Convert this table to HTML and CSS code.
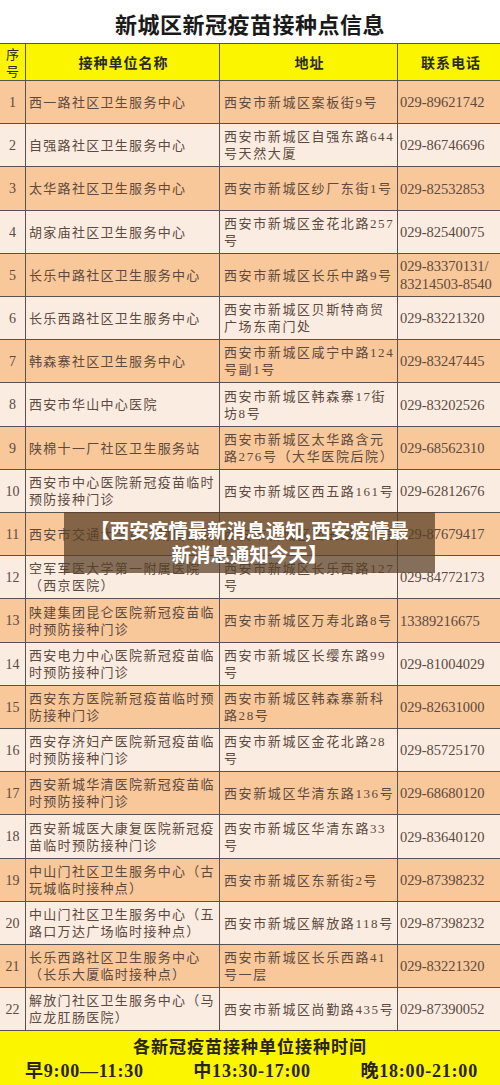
FILE: index.html
```html
<!DOCTYPE html>
<html lang="zh">
<head>
<meta charset="utf-8">
<title>新城区新冠疫苗接种点信息</title>
<link rel="stylesheet" href="styles.css">
</head>
<body>
<div class="page">
  <h1 class="title">新城区新冠疫苗接种点信息</h1>
  <table class="grid">
    <colgroup><col class="c1"><col class="c2"><col class="c3"><col class="c4"></colgroup>
    <thead>
      <tr class="head"><th class="num">序<br>号</th><th>接种单位名称</th><th>地址</th><th>联系电话</th></tr>
    </thead>
    <tbody>
      <tr class="odd"><td class="num">1</td><td class="name">西一路社区卫生服务中心</td><td class="addr">西安市新城区案板街9号</td><td class="tel">029-89621742</td></tr>
      <tr class="even"><td class="num">2</td><td class="name">自强路社区卫生服务中心</td><td class="addr">西安市新城区自强东路644号天然大厦</td><td class="tel">029-86746696</td></tr>
      <tr class="odd"><td class="num">3</td><td class="name">太华路社区卫生服务中心</td><td class="addr">西安市新城区纱厂东街1号</td><td class="tel">029-82532853</td></tr>
      <tr class="even"><td class="num">4</td><td class="name">胡家庙社区卫生服务中心</td><td class="addr">西安市新城区金花北路257号</td><td class="tel">029-82540075</td></tr>
      <tr class="odd"><td class="num">5</td><td class="name">长乐中路社区卫生服务中心</td><td class="addr">西安市新城区长乐中路9号</td><td class="tel">029-83370131/<br>83214503-8540</td></tr>
      <tr class="even"><td class="num">6</td><td class="name">长乐西路社区卫生服务中心</td><td class="addr">西安市新城区贝斯特商贸广场东南门处</td><td class="tel">029-83221320</td></tr>
      <tr class="odd"><td class="num">7</td><td class="name">韩森寨社区卫生服务中心</td><td class="addr">西安市新城区咸宁中路124号副1号</td><td class="tel">029-83247445</td></tr>
      <tr class="even"><td class="num">8</td><td class="name">西安市华山中心医院</td><td class="addr">西安市新城区韩森寨17街坊8号</td><td class="tel">029-83202526</td></tr>
      <tr class="odd"><td class="num">9</td><td class="name">陕棉十一厂社区卫生服务站</td><td class="addr"><div class="clip">西安市新城区太华路含元路276号（大华医院后院）</div></td><td class="tel">029-68562310</td></tr>
      <tr class="even"><td class="num">10</td><td class="name">西安市中心医院新冠疫苗临时预防接种门诊</td><td class="addr">西安市新城区西五路161号</td><td class="tel">029-62812676</td></tr>
      <tr class="odd"><td class="num">11</td><td class="name">西安市交通大学第二附属医院</td><td class="addr">西安市新城区西五路157号</td><td class="tel">029-87679417</td></tr>
      <tr class="even"><td class="num">12</td><td class="name">空军军医大学第一附属医院（西京医院）</td><td class="addr">西安市新城区长乐西路127号</td><td class="tel">029-84772173</td></tr>
      <tr class="odd"><td class="num">13</td><td class="name">陕建集团昆仑医院新冠疫苗临时预防接种门诊</td><td class="addr">西安市新城区万寿北路8号</td><td class="tel">13389216675</td></tr>
      <tr class="even"><td class="num">14</td><td class="name">西安电力中心医院新冠疫苗临时预防接种门诊</td><td class="addr">西安市新城区长缨东路99号</td><td class="tel">029-81004029</td></tr>
      <tr class="odd"><td class="num">15</td><td class="name">西安东方医院新冠疫苗临时预防接种门诊</td><td class="addr">西安市新城区韩森寨新科路28号</td><td class="tel">029-82631000</td></tr>
      <tr class="even"><td class="num">16</td><td class="name">西安存济妇产医院新冠疫苗临时预防接种门诊</td><td class="addr">西安市新城区金花北路28号</td><td class="tel">029-85725170</td></tr>
      <tr class="odd"><td class="num">17</td><td class="name">西安新城华清医院新冠疫苗临时预防接种门诊</td><td class="addr">西安新城区华清东路136号</td><td class="tel">029-68680120</td></tr>
      <tr class="even"><td class="num">18</td><td class="name">西安新城医大康复医院新冠疫苗临时预防接种门诊</td><td class="addr">西安市新城区华清东路33号</td><td class="tel">029-83640120</td></tr>
      <tr class="odd"><td class="num">19</td><td class="name">中山门社区卫生服务中心（古玩城临时接种点）</td><td class="addr">西安市新城区东新街2号</td><td class="tel">029-87398232</td></tr>
      <tr class="even"><td class="num">20</td><td class="name">中山门社区卫生服务中心（五路口万达广场临时接种点）</td><td class="addr">西安市新城区解放路118号</td><td class="tel">029-87398232</td></tr>
      <tr class="odd"><td class="num">21</td><td class="name">长乐西路社区卫生服务中心（长乐大厦临时接种点）</td><td class="addr">西安市新城区长乐西路41号一层</td><td class="tel">029-83221320</td></tr>
      <tr class="even"><td class="num">22</td><td class="name">解放门社区卫生服务中心（马应龙肛肠医院）</td><td class="addr">西安市新城区尚勤路435号</td><td class="tel">029-87390052</td></tr>
    </tbody>
  </table>
  <div class="footer">
    <div class="foot-title">各新冠疫苗接种单位接种时间</div>
    <div class="foot-times"><span>早9:00—11:30</span><span>中13:30-17:00</span><span>晚18:00-21:00</span></div>
  </div>
  <div class="banner">【西安疫情最新消息通知,西安疫情最<br>新消息通知今天】</div>
</div>
</body>
</html>
```
FILE: styles.css
```css
html, body {
  margin: 0;
  padding: 0;
  background: #ffffff;
}
.page {
  position: relative;
  width: 500px;
  height: 1085px;
  overflow: hidden;
  font-family: "Liberation Serif", "Noto Sans CJK SC", serif;
}
.title {
  margin: 0;
  height: 43px;
  line-height: 46px;
  text-align: center;
  font-size: 22px;
  font-weight: bold;
  color: #1a1a1a;
  font-family: "Noto Sans CJK SC", sans-serif;
  letter-spacing: 0.5px;
}
.grid {
  border-collapse: collapse;
  table-layout: fixed;
  width: 503px;
  margin-left: -1px;
}
.c1 { width: 26px; }
.c2 { width: 194px; }
.c3 { width: 178px; }
.c4 { width: 105px; }
.grid th, .grid td {
  border: 1px solid #5a5250;
  padding: 0 1px 0 3px;
  overflow: hidden;
}
.head th {
  background: #fbf500;
  height: 36px;
  font-family: "Noto Sans CJK SC", sans-serif;
  font-weight: bold;
  font-size: 14px;
  color: #2a2a20;
  letter-spacing: 1px;
}
.head th.num {
  font-weight: normal;
  font-size: 13px;
  line-height: 17px;
  padding: 0;
  letter-spacing: 0;
}
.grid tbody tr { height: 43px; }
.grid tbody tr:nth-child(5n+3) { height: 44px; }
.odd td { background: #f8c79a; }
.even td { background: #fbece2; }
.grid td {
  color: #5c4a3e;
  font-size: 13px;
  line-height: 17px;
  letter-spacing: 1.3px;
}
.grid td.num {
  text-align: center;
  padding: 0;
  font-size: 14px;
  letter-spacing: 0;
}
.grid td.addr { padding-left: 4px; letter-spacing: 1.6px; }
.grid td.tel {
  font-size: 14.5px;
  letter-spacing: 0;
  padding-left: 2px;
  line-height: 18px;
}
.clip {
  height: 34px;
  overflow: hidden;
}
.footer {
  background: #fbf500;
  height: 56px;
  color: #2a2418;
  font-weight: bold;
  font-family: "Liberation Serif", "Noto Sans CJK SC", serif;
}
.foot-title {
  text-align: center;
  font-size: 17px;
  letter-spacing: 1px;
  padding-top: 6px;
  line-height: 22px;
}
.foot-times {
  display: flex;
  justify-content: space-between;
  padding: 0 22px 0 25px;
  font-size: 18px;
  line-height: 24px;
  letter-spacing: 0.8px;
}
.banner {
  position: absolute;
  left: 64px;
  top: 512px;
  width: 371px;
  height: 61px;
  box-sizing: border-box;
  padding-top: 6px;
  background: rgba(88, 62, 38, 0.72);
  color: #ffffff;
  font-family: "Noto Sans CJK SC", sans-serif;
  font-weight: bold;
  font-size: 19.5px;
  line-height: 24px;
  text-align: center;
}
```
